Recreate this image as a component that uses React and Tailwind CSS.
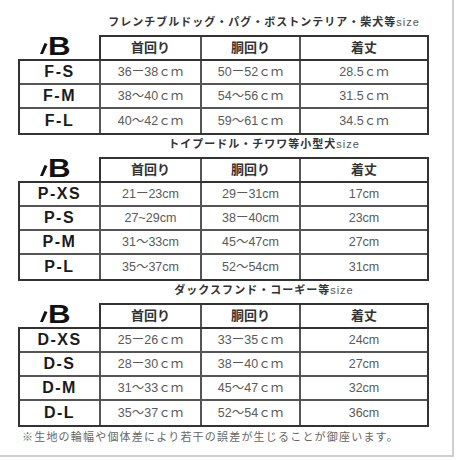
import React from "react";

const FONT = { fontFamily: "'Liberation Sans','Noto Sans CJK JP',sans-serif" };

const sections = [
  {
    title: "フレンチブルドッグ・パグ・ボストンテリア・柴犬等",
    rows: [
      ["F-S", "36ー38ｃｍ", "50ー52ｃｍ", "28.5ｃｍ"],
      ["F-M", "38～40ｃｍ", "54～56ｃｍ", "31.5ｃｍ"],
      ["F-L", "40～42ｃｍ", "59～61ｃｍ", "34.5ｃｍ"],
    ],
  },
  {
    title: "トイプードル・チワワ等小型犬",
    rows: [
      ["P-XS", "21ー23cm", "29ー31cm", "17cm"],
      ["P-S", "27~29cm", "38ー40cm", "23cm"],
      ["P-M", "31～33cm", "45～47cm", "27cm"],
      ["P-L", "35～37cm", "52～54cm", "31cm"],
    ],
  },
  {
    title: "ダックスフンド・コーギー等",
    rows: [
      ["D-XS", "25ー26ｃｍ", "33ー35ｃｍ", "24cm"],
      ["D-S", "28ー30ｃｍ", "38ー40ｃｍ", "27cm"],
      ["D-M", "31～33ｃｍ", "45～47ｃｍ", "32cm"],
      ["D-L", "35～37ｃｍ", "52～54ｃｍ", "36cm"],
    ],
  },
];

function Logo() {
  return (
    <div className="w-[81px] h-[24px] flex items-end pl-[21px] pb-[3px]">
      <svg width="9" height="13" viewBox="0 0 9 13" className="mb-[1px]">
        <polygon points="1,12 4,12 8.5,2 5.5,1" fill="#111" />
      </svg>
      <span
        className="inline-block origin-left scale-x-125 text-[25px] leading-[19px] font-bold text-[#111]"
        style={FONT}
      >
        B
      </span>
    </div>
  );
}

function Section({ title, rows }) {
  return (
    <div className="ml-[18px] w-[411px]">
      <div className="h-[22px] pl-[81px]">
        <div
          className="text-center text-[11px] leading-[18px] font-bold tracking-[1px] text-[#333]"
          style={FONT}
        >
          {title}
          <span className="font-normal text-[#555]">size</span>
        </div>
      </div>
      <div className="flex">
        <Logo />
        <div className="flex border-2 border-b-0 border-[#333]">
          {["首回り", "胴回り", "着丈"].map((h, i) => (
            <div
              key={h}
              className={
                "h-[22px] flex items-center justify-center text-[13px] font-bold text-[#333] " +
                (i === 0
                  ? "w-[101px] border-r-2 border-[#555]"
                  : i === 1
                  ? "w-[99px] border-r-2 border-[#555]"
                  : "w-[126px]")
              }
              style={FONT}
            >
              {h}
            </div>
          ))}
        </div>
      </div>
      <div className="border-2 border-[#333]">
        {rows.map((r, ri) => (
          <div
            key={r[0]}
            className={
              "flex h-[24px] " +
              (ri < rows.length - 1 ? "border-b-2 border-[#555]" : "")
            }
          >
            <div
              className="w-[81px] border-r-2 border-[#555] flex items-center justify-center text-[16px] font-bold tracking-[1.5px] text-[#1a1a1a]"
              style={FONT}
            >
              {r[0]}
            </div>
            <div
              className="w-[101px] border-r-2 border-[#555] flex items-center justify-center text-[12.5px] text-[#5a5a5a]"
              style={FONT}
            >
              {r[1]}
            </div>
            <div
              className="w-[99px] border-r-2 border-[#555] flex items-center justify-center text-[12.5px] text-[#5a5a5a]"
              style={FONT}
            >
              {r[2]}
            </div>
            <div
              className="w-[126px] flex items-center justify-center text-[12.5px] text-[#5a5a5a]"
              style={FONT}
            >
              {r[3]}
            </div>
          </div>
        ))}
      </div>
    </div>
  );
}

export default function App() {
  return (
    <div className="w-[460px] h-[460px] bg-white">
      <div className="w-[454px] h-[457px] border-r-2 border-b-2 border-[#cfcfcf] pt-[13px]">
        {sections.map((s) => (
          <Section key={s.title} {...s} />
        ))}
        <div
          className="ml-[22px] mt-[2px] text-[11px] leading-[16px] tracking-[1.2px] text-[#666]"
          style={FONT}
        >
          ※生地の輪幅や個体差により若干の誤差が生じることが御座います。
        </div>
      </div>
    </div>
  );
}
